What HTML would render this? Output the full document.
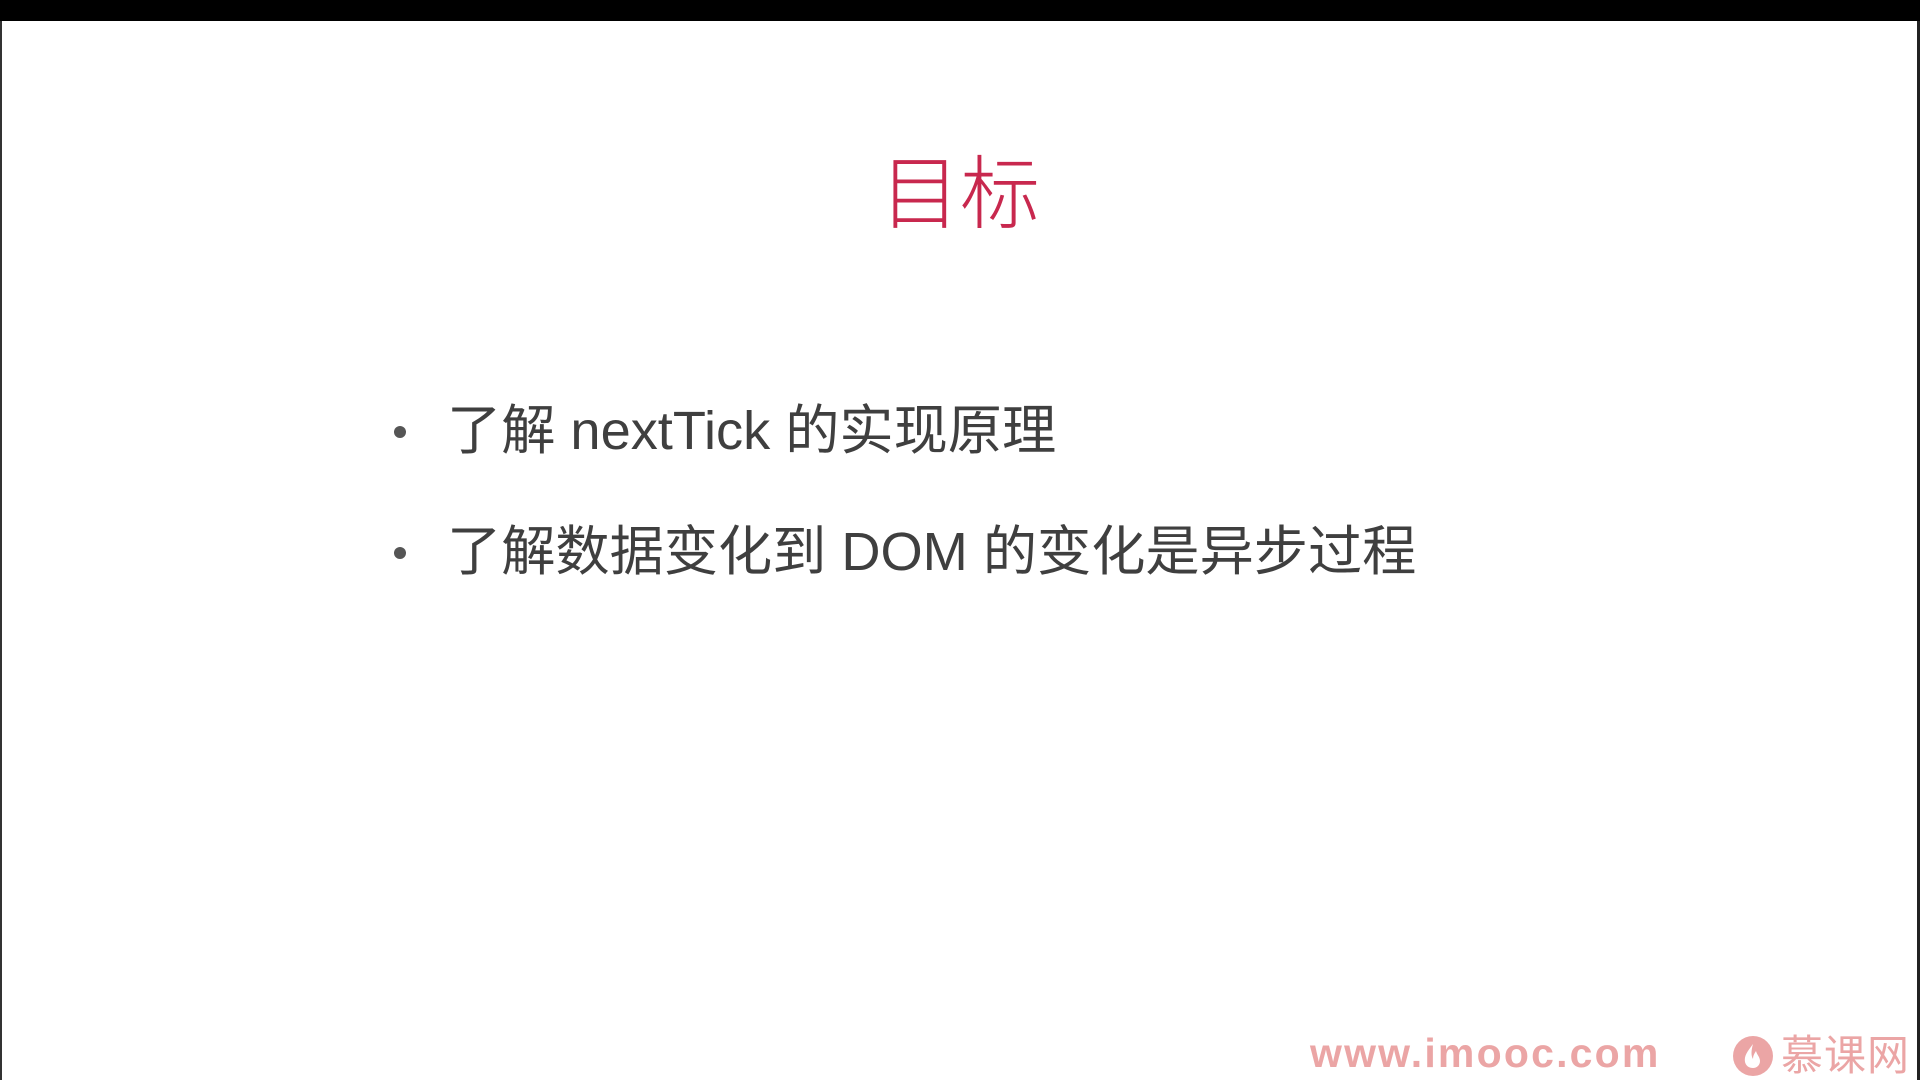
<!DOCTYPE html>
<html><head><meta charset="utf-8"><style>
html,body{margin:0;padding:0;width:1920px;height:1080px;overflow:hidden;background:#fff;}
body{position:relative;font-family:"Liberation Sans","Noto Sans CJK SC",sans-serif;}
.top{position:absolute;left:0;top:0;width:1920px;height:21px;background:#000;}
.lb{position:absolute;left:0;top:21px;width:2px;height:1059px;background:#333;}
.rb{position:absolute;right:0;top:21px;width:3px;height:1059px;background:#222;}
.title{position:absolute;left:0;width:1920px;top:138px;text-align:center;font-size:80px;line-height:100px;color:#c8284e;font-family:"Noto Sans CJK SC",sans-serif;font-weight:300;}
.li{position:absolute;left:447px;font-size:54.2px;line-height:70px;color:#3f3f3f;font-family:"Liberation Sans","Noto Sans CJK SC",sans-serif;white-space:nowrap;}
.dot{position:absolute;left:394px;width:12px;height:12px;border-radius:50%;background:#555;}
.wm{position:absolute;left:1310px;top:1029px;font-size:41px;font-weight:bold;color:#eba5a5;line-height:48px;letter-spacing:2.2px;}
.logo{position:absolute;left:1733px;top:1036px;width:40px;height:40px;border-radius:50%;background:#eba5a5;}
.wm2{position:absolute;left:1781px;top:1029px;font-size:42px;color:#eba5a5;line-height:48px;letter-spacing:1px;font-family:"Noto Sans CJK SC",sans-serif;}
</style></head><body>
<div class="top"></div><div class="lb"></div><div class="rb"></div>
<div class="title">目标</div>
<div class="dot" style="top:426px"></div>
<div class="li" style="top:396px">了解 nextTick 的实现原理</div>
<div class="dot" style="top:547px"></div>
<div class="li" style="top:517px">了解数据变化到 DOM 的变化是异步过程</div>
<div class="wm">www.imooc.com</div>
<div class="logo"><svg width="40" height="40" viewBox="0 0 40 40"><path d="M20 8c-6 8-9 12-8 18 1 4 4 6 8 6s7-3 7-7c0-4-3-6-4-10-2 3-3 5-3 8-2-3-2-8 0-15z" fill="#fff"/></svg></div>
<div class="wm2">慕课网</div>
</body></html>
